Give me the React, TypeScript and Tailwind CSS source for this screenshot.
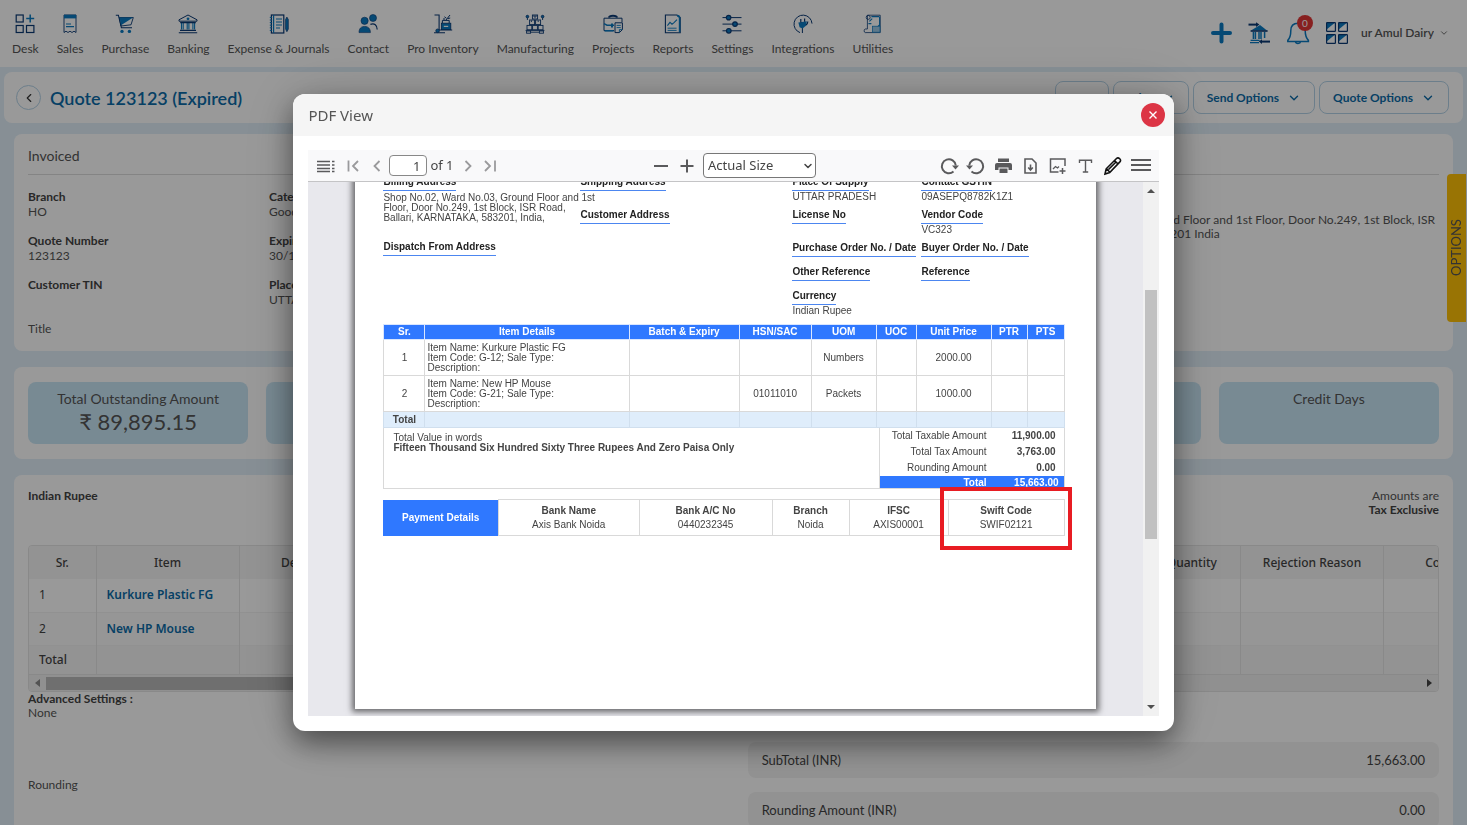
import React from "react";
import { ChevronDown, ChevronLeft } from "lucide-react";

const NAVY = "#0b3a75";
const BLUE = "#0a7bc2";

function Svg({ children, size = 20, box = 20 }: { children: React.ReactNode; size?: number; box?: number }) {
  return (
    <svg width={size} height={size} viewBox={`0 0 ${box} ${box}`} fill="none" stroke={NAVY} strokeWidth="1.2" aria-hidden="true">
      {children}
    </svg>
  );
}

const navItems: { label: string; icon: React.ReactNode }[] = [
  {
    label: "Desk",
    icon: (
      <Svg>
        <rect x="1.2" y="1" width="7" height="7" />
        <rect x="1.2" y="11.5" width="7" height="7" />
        <rect x="11.5" y="11.5" width="7.4" height="7" />
        <path d="M15.2 0.5v8M11.2 4.5h8" stroke={BLUE} strokeWidth="1.5" />
      </Svg>
    ),
  },
  {
    label: "Sales",
    icon: (
      <Svg>
        <path d="M4 1h12v17.5l-2-1.3-2 1.3-2-1.3-2 1.3-2-1.3-2 1.3z" strokeWidth="0.9" />
        <rect x="4" y="0.8" width="12.2" height="3.6" fill={BLUE} stroke="none" />
        <path d="M6 10h5M6 12.6h8" stroke={BLUE} />
      </Svg>
    ),
  },
  {
    label: "Purchase",
    icon: (
      <Svg>
        <path d="M0.8 1.2h2.6l3 12.6h10.6" strokeWidth="1.1" />
        <path d="M4.3 3.5h14L16 10.8 6 12z" strokeWidth="0.9" />
        <path d="M4.5 3.5h13.6L6 11.2z" fill={BLUE} stroke="none" />
        <circle cx="7" cy="17.4" r="1.7" fill={BLUE} stroke="none" />
        <circle cx="14.4" cy="17.4" r="1.7" fill={BLUE} stroke="none" />
      </Svg>
    ),
  },
  {
    label: "Banking",
    icon: (
      <Svg>
        <path d="M1 7.2V5.8L10 1l9 4.8v1.4z" strokeWidth="1" />
        <circle cx="10" cy="4.8" r="1.4" fill={BLUE} stroke="none" />
        <path d="M3.5 9v6.6M5.2 9v6.6M9.2 9v6.6M10.9 9v6.6M14.9 9v6.6M16.6 9v6.6" strokeWidth="1.1" stroke={BLUE} />
        <path d="M2.2 8.6h15.6M2 16.4h16M0.8 18.8h18.4" strokeWidth="1.1" />
      </Svg>
    ),
  },
  {
    label: "Expense & Journals",
    icon: (
      <Svg>
        <rect x="2.4" y="1" width="12.4" height="18" strokeWidth="1.2" />
        <path d="M4.6 1v18" stroke={BLUE} />
        <path d="M0.8 3.4h2.4M0.8 6h2.4M0.8 8.6h2.4M0.8 11.2h2.4M0.8 13.8h2.4M0.8 16.4h2.4" stroke={BLUE} strokeWidth="1" />
        <path d="M7 5h6M7 8h6M7 11h6M7 14h4" stroke={BLUE} strokeWidth="1.1" />
        <path d="M16.6 5.5l1.3-2.4 1.4 2.4v9.6l-1.4 2.6-1.3-2.6z" fill={BLUE} strokeWidth="0.7" />
      </Svg>
    ),
  },
  {
    label: "Contact",
    icon: (
      <Svg>
        <circle cx="6.6" cy="6.8" r="3.6" fill={BLUE} strokeWidth="0.6" />
        <path d="M1 18.6c0-4 2-6.2 5.6-6.2s5.8 2.2 5.8 6.2z" fill={BLUE} strokeWidth="0.6" />
        <circle cx="15" cy="4" r="3.5" fill={BLUE} strokeWidth="0.6" />
        <path d="M12.4 10.4c4-1.6 6.8.8 6.8 5.2" />
      </Svg>
    ),
  },
  {
    label: "Pro Inventory",
    icon: (
      <Svg>
        <path d="M1.5 1h4.6v15.2M6 16h13.2M1 18.8h11" strokeWidth="1.1" />
        <circle cx="4.6" cy="16.8" r="1.8" fill={BLUE} strokeWidth="0.8" />
        <rect x="8.4" y="9.2" width="9.4" height="6.4" fill={BLUE} strokeWidth="0.8" />
        <path d="M10.8 12.4h4.4" stroke="#fff" />
        <path d="M9.4 9V6.4h6.8V9M11 6V4M13 6l4-5M11.4 2.8l2 1.4M14.6 4.6l2.6-.6" strokeWidth="1" />
      </Svg>
    ),
  },
  {
    label: "Manufacturing",
    icon: (
      <Svg>
        <g strokeWidth="0.9">
          <rect x="7.4" y="1" width="5.2" height="4" />
          <rect x="4.6" y="6" width="5" height="4.6" />
          <rect x="10.6" y="6" width="5" height="4.6" />
          <rect x="2" y="11.4" width="4.8" height="4.4" />
          <rect x="7.6" y="11.4" width="4.8" height="4.4" />
          <rect x="13.2" y="11.4" width="4.8" height="4.4" />
          <path d="M0.6 16.4h18.8M2.4 6v-2M17.6 6v-2M9 1v2h2v-2M6.4 6.4v1.6M13.2 6.4v1.6" />
          <circle cx="2.4" cy="2.6" r="1.3" fill={BLUE} />
          <circle cx="17.6" cy="2.6" r="1.3" fill={BLUE} />
          <rect x="1.6" y="17" width="4" height="2.2" />
          <rect x="14.4" y="17" width="4" height="2.2" />
          <path d="M6 18.2h8" />
        </g>
      </Svg>
    ),
  },
  {
    label: "Projects",
    icon: (
      <Svg>
        <path d="M6 3.6C6.4 1 13.6 1 14 3.6" strokeWidth="2" />
        <path d="M11 16.6H1V4.2h18v4" strokeWidth="1" />
        <path d="M1 9.6l3 1.6h7" stroke={BLUE} strokeWidth="1.4" />
        <path d="M9 9.4v4" stroke={BLUE} strokeWidth="2" />
        <path d="M1.6 16.8h9" stroke={BLUE} strokeWidth="1.6" />
        <path d="M12 8.8h7.4v6.8l-3 3H12z" strokeWidth="1" />
        <path d="M13.6 11.4h4.2M13.6 13.6h4.2M16.4 18.4v-2.8h3" stroke={BLUE} strokeWidth="0.9" />
      </Svg>
    ),
  },
  {
    label: "Reports",
    icon: (
      <Svg>
        <path d="M2.4 1h11.4l3.4 2.6v15.2H2.4z" strokeWidth="1.1" />
        <path d="M14 1.6c1.6 0 2.6 1 2.6 2.6v14" stroke={BLUE} strokeWidth="1.6" />
        <path d="M4.4 11.6l2.6-3.2 2 1.8 2-1.6 3-3" stroke={BLUE} strokeWidth="1.1" />
        <path d="M4.6 14.2h9M4.6 16.4h9" stroke={BLUE} strokeWidth="0.9" />
      </Svg>
    ),
  },
  {
    label: "Settings",
    icon: (
      <Svg>
        <path d="M0.5 3.6h19M0.5 10.1h19M0.5 16.8h19" strokeWidth="1" />
        <circle cx="6.6" cy="3.6" r="2.3" fill={BLUE} />
        <circle cx="13" cy="10.1" r="2.3" fill={BLUE} />
        <circle cx="6.8" cy="16.8" r="2.3" fill={BLUE} />
      </Svg>
    ),
  },
  {
    label: "Integrations",
    icon: (
      <Svg>
        <path d="M9.4 19v-5.2M7 18.6A9 9 0 1 1 19 9.6" strokeWidth="1" />
        <path d="M5.4 8.6l8.4-1.4-.6 4.4-3.6 2.8-3-1.2z" fill={BLUE} stroke="none" />
        <path d="M7.8 8.4V5M11.6 7.8V4.4M13 11c1.4-.8 1.8-2 1.8-3.4" strokeWidth="1.2" />
      </Svg>
    ),
  },
  {
    label: "Utilities",
    icon: (
      <Svg>
        <path d="M4.4 1.2h12.8v17.4H2.2c-1.4 0-1.4-3.6 0-3.6h2.2z" strokeWidth="0.8" />
        <circle cx="5.2" cy="3.4" r="2" strokeWidth="0.8" />
        <path d="M8.4 2.6h8M16.6 3v9M6.4 7.4l2.8-2.8M5.4 9.6h3M12.6 15.4l3.6-4.2" stroke={BLUE} strokeWidth="1.1" />
        <rect x="9.4" y="12.2" width="7.6" height="6" fill="#9cc9e6" stroke={BLUE} strokeWidth="0.7" />
      </Svg>
    ),
  },
];

const fields: { label: string; value?: string }[][] = [
  [{ label: "Branch", value: "HO" }, { label: "Category", value: "Goods" }],
  [{ label: "Quote Number", value: "123123" }, { label: "Expiry Date", value: "30/11/2023" }],
  [{ label: "Customer TIN" }, { label: "Place Of Supply", value: "UTTAR PRADESH" }],
];

function TopBar() {
  return (
    <header className="flex h-[67px] items-start justify-between bg-white text-[#555]">
      <nav className="flex gap-[18px] pl-3 pt-[14px]">
        {navItems.map((n) => (
          <a key={n.label} href="#" className="flex flex-col items-center gap-[7px] whitespace-nowrap text-[12px] leading-4">
            {n.icon}
            {n.label}
          </a>
        ))}
      </nav>
      <div className="flex items-center pr-[18px] pt-[20px]">
        <button aria-label="Add" className="mr-4">
          <svg width="21" height="26" viewBox="0 0 21 26" stroke={BLUE} strokeWidth="4" strokeLinecap="round">
            <path d="M10.5 4.5v17M2 13h17" />
          </svg>
        </button>
        <button aria-label="Bank transfer" className="mr-4">
          <Svg size={22} box={22}>
            <path d="M3 8.4L12 3l7 5.4z" fill={BLUE} stroke="none" />
            <path d="M0.5 2.6h8" strokeWidth="2" />
            <path d="M8 0.2l3.4 2.4L8 5z" fill={NAVY} stroke="none" />
            <path d="M2.6 9h17" strokeWidth="1.6" />
            <path d="M5.4 10v7M7.4 10v7M11 10v7M13 10v7M16.6 10v6" stroke={BLUE} strokeWidth="1.5" />
            <path d="M2.6 18.4h9M2 20.6h9" stroke={BLUE} strokeWidth="1.3" />
            <path d="M13 19.6h9" strokeWidth="2" />
            <path d="M14 17.2l-3.2 2.4 3.2 2.4z" fill={NAVY} stroke="none" />
          </Svg>
        </button>
        <button aria-label="Notifications" className="relative mr-4">
          <svg width="24" height="24" viewBox="0 0 24 24" fill="none" stroke={BLUE} strokeWidth="1.5">
            <path d="M12 2.2c4.6 0 7.2 3 7.2 7.4 0 5 1 7.6 3.2 9.8v1H1.8v-1C4 17.200 4.800 14.600 4.800 9.600 4.800 5.200 7.400 2.200 12 2.200zM9.400 20.600c.4 2.400 4.800 2.400 5.200 0" />
          </svg>
          <span className="absolute -top-[6px] left-[11px] h-4 w-4 rounded-full bg-[#e23636] text-center text-[10px] leading-4 text-white">0</span>
        </button>
        <button aria-label="Apps" className="mr-3">
          <Svg size={22} box={22}>
            {[0, 12].map((x) =>
              [0, 12].map((y) => (
                <g key={`${x}-${y}`}>
                  <path d={`M${x + 0.6} ${y + 0.6}h8.600l-8.600 7z`} fill={BLUE} stroke="none" />
                  <rect x={x + 0.6} y={y + 0.6} width="8.800" height="8.800" rx="0.600" />
                </g>
              )),
            )}
          </Svg>
        </button>
        <button className="flex items-center gap-[5px] text-[12px] font-semibold leading-4">
          <span className="flex w-[74px] justify-end overflow-hidden whitespace-nowrap">ur Amul Dairy</span>
          <ChevronDown size={10} />
        </button>
      </div>
    </header>
  );
}

function BarButton({ children }: { children: React.ReactNode }) {
  return (
    <button className="flex h-[33px] items-center gap-2 rounded-lg border border-[#b5d3e8] px-[13px] text-[12px] font-bold text-[#0b6ba8]">
      {children}
      <ChevronDown size={14} strokeWidth={2.4} />
    </button>
  );
}

function TitleBar() {
  return (
    <div className="mx-1 mt-[5px] flex h-[51px] items-center justify-between rounded-lg bg-white pl-3 pr-[14px]">
      <div className="flex items-center gap-[9px]">
        <button aria-label="Back" className="flex h-[25px] w-[25px] items-center justify-center rounded-full border border-[#b5d3e8] text-[#333]">
          <ChevronLeft size={14} />
        </button>
        <h1 className="text-[18px] font-semibold leading-6 text-[#0b6ba8]">Quote 123123 (Expired)</h1>
      </div>
      <div className="flex gap-1">
        <button aria-label="Upload" className="h-[33px] w-[54px] rounded-lg border border-[#b5d3e8]">
          <span className="mx-auto block h-[6px] w-[6px] rounded-full bg-[#0b6ba8]" />
        </button>
        <BarButton>Print</BarButton>
        <BarButton>Send Options</BarButton>
        <BarButton>Quote Options</BarButton>
      </div>
    </div>
  );
}

function InvoicedCard() {
  return (
    <section className="mx-[14px] mt-[11px] h-[217px] rounded-lg bg-white px-[14px] pt-[10px] text-[12px] leading-[15px] text-[#555]">
      <h2 className="border-b border-[#dcdcdc] pb-[6px] text-[14px] leading-6">Invoiced</h2>
      <div className="mt-[14px] flex justify-between">
        <div className="flex w-1/2 flex-col gap-[14px]">
          {fields.map((row, i) => (
            <dl key={i} className="flex h-[30px]">
              {row.map((f) => (
                <div key={f.label} className="w-[241px]">
                  <dt className="font-bold text-[#444]">{f.label}</dt>
                  <dd>{f.value}</dd>
                </div>
              ))}
            </dl>
          ))}
          <p>Title</p>
        </div>
        <p className="whitespace-nowrap pr-1 pt-6 leading-[14px]">
          Shop No.02, Ward No.03, Ground Floor and 1st Floor, Door No.249, 1st Block, ISR
          <br />
          Road, Ballari, KARNATAKA, 583201 India
        </p>
      </div>
    </section>
  );
}

function Tiles() {
  const tiles = [{ t: "Total Outstanding Amount", v: "₹ 89,895.15" }, {}, {}, {}, {}, { t: "Credit Days" }] as { t?: string; v?: string }[];
  return (
    <section className="mx-[14px] mt-4 grid grid-cols-6 gap-[18px] rounded-lg bg-white px-[14px] py-[15px] text-[#555]">
      {tiles.map((t, i) => (
        <div key={i} className="h-[62px] rounded-lg bg-[#c9e6f5] pt-2 text-center">
          <p className="text-[14px] leading-[18px]">{t.t}</p>
          <p className="text-[22px] leading-7">{t.v}</p>
        </div>
      ))}
    </section>
  );
}

function ItemsTable() {
  const cell = "border-r border-[#e4e4e4] px-[10px]";
  return (
    <div className="mt-7 overflow-hidden rounded border border-[#e4e4e4] font-['Noto_Sans',sans-serif] text-[#444]">
      <table className="w-[calc(100%+92px)] table-fixed border-collapse text-[12px]">
        <colgroup>
          <col className="w-[67px]" />
          <col className="w-[143px]" />
          <col className="w-[150px]" />
          <col />
          <col className="w-[150px]" />
          <col className="w-[143px]" />
          <col className="w-[146px]" />
        </colgroup>
        <thead className="h-[33px] bg-[#f5f5f5]">
          <tr>
            {["Sr.", "Item", "Description", "", "Rejected Quantity", "Rejection Reason", "Comments"].map((h, i) => (
              <th key={i} className={`${cell} whitespace-nowrap font-medium`}>{h}</th>
            ))}
          </tr>
        </thead>
        <tbody>
          {["Kurkure Plastic FG", "New HP Mouse"].map((name, i) => (
            <tr key={name} className="h-[33px] border-b border-[#f2f2f2] even:bg-[#fbfbfb]">
              <td className={cell}>{i + 1}</td>
              <td className={`${cell} whitespace-nowrap font-semibold`}>
                <a href="#" className="text-[#0b6ba8]">{name}</a>
              </td>
              {[0, 1, 2, 3, 4].map((k) => (
                <td key={k} className={cell} />
              ))}
            </tr>
          ))}
          <tr className="h-[29px] bg-[#f5f5f5]">
            <td className={`${cell} font-medium`}>Total</td>
            {[0, 1, 2, 3, 4, 5].map((k) => (
              <td key={k} className={cell} />
            ))}
          </tr>
        </tbody>
      </table>
      <div className="flex h-[17px] items-center justify-between border-t border-[#e4e4e4] bg-[#f1f1f1] px-[6px]">
        <svg width="5" height="8" viewBox="0 0 5 8"><path d="M5 0v8L0 4z" fill="#8a8a8a" /></svg>
        <div className="ml-[6px] h-[13px] w-1/2 bg-[#b9b9b9]" />
        <div className="flex-1" />
        <svg width="5" height="8" viewBox="0 0 5 8"><path d="M0 0v8l5-4z" fill="#444" /></svg>
      </div>
    </div>
  );
}

function DetailsCard() {
  return (
    <section className="mx-[14px] mt-4 h-[400px] rounded-t-lg bg-white px-[14px] pt-[14px] text-[12px] leading-[14px] text-[#555]">
      <div className="flex justify-between">
        <strong className="font-bold text-[#444]">Indian Rupee</strong>
        <p className="text-right">
          Amounts are
          <br />
          <strong className="font-bold text-[#444]">Tax Exclusive</strong>
        </p>
      </div>
      <ItemsTable />
      <div className="flex justify-between">
        <div>
          <p className="font-bold text-[#444]">Advanced Settings :</p>
          <p>None</p>
          <p className="mt-[58px]">Rounding</p>
        </div>
        <div className="mt-[50px] flex w-[49%] flex-col gap-[14px] text-[13px] text-[#444]">
          <div className="flex h-9 items-center justify-between rounded-lg bg-[#f3f3f3] px-[14px]">
            <span>SubTotal (INR)</span>
            <span>15,663.00</span>
          </div>
          <div className="flex h-9 items-center justify-between rounded-lg bg-[#f3f3f3] px-[14px]">
            <span>Rounding Amount (INR)</span>
            <span>0.00</span>
          </div>
        </div>
      </div>
    </section>
  );
}

function ToolIcon({ label, children, w = 20 }: { label: string; children: React.ReactNode; w?: number }) {
  return (
    <button aria-label={label} className="flex h-6 items-center justify-center">
      <svg width={w} height="20" viewBox={`0 0 ${w} 20`} fill="none" stroke="#5a5a5c" strokeWidth="2">
        {children}
      </svg>
    </button>
  );
}

function Toolbar() {
  return (
    <div className="grid h-8 grid-cols-[1fr_auto_1fr] items-center border-b border-[#c4c4c6] bg-[#f9f9fa] px-2 text-[13px] text-[#444]">
      <div className="flex items-center">
        <ToolIcon label="Toggle sidebar">
          <path d="M1 5.500h13M1 9h13M1 12.500h13M1 15.500h13M16 5.500h2.500M16 9h2.500M16 12.500h2.500M16 15.500h2.500" strokeWidth="1.700" />
        </ToolIcon>
        <span className="ml-2 flex gap-1">
          <ToolIcon label="First page">
            <path d="M4.500 4.500v11M14 5l-5 5 5 5" stroke="#9a9a9c" strokeWidth="1.800" />
          </ToolIcon>
          <ToolIcon label="Previous page">
            <path d="M11.500 5l-5 5 5 5" stroke="#9a9a9c" strokeWidth="1.800" />
          </ToolIcon>
        </span>
        <input aria-label="Page" defaultValue="1" className="ml-[1px] h-[21px] w-[38px] rounded-sm border border-[#888] bg-white px-[6px] text-right" />
        <span className="ml-[3px]">of 1</span>
        <span className="ml-1 flex gap-[2px]">
          <ToolIcon label="Next page">
            <path d="M7.500 5l5 5-5 5" stroke="#9a9a9c" strokeWidth="1.800" />
          </ToolIcon>
          <ToolIcon label="Last page">
            <path d="M5 5l5 5-5 5M15 4.500v11" stroke="#9a9a9c" strokeWidth="1.800" />
          </ToolIcon>
        </span>
      </div>
      <div className="flex items-center gap-[6px]">
        <ToolIcon label="Zoom out">
          <path d="M3 10h14" />
        </ToolIcon>
        <ToolIcon label="Zoom in">
          <path d="M3.500 10h13M10 3.500v13" />
        </ToolIcon>
        <span className="relative flex items-center">
          <select aria-label="Zoom" className="h-[25px] w-[113px] appearance-none rounded-sm border border-[#777] bg-white pl-1 text-[13px]">
            <option>Actual Size</option>
          </select>
          <ChevronDown size={12} strokeWidth={3} className="pointer-events-none absolute right-[2px]" />
        </span>
      </div>
      <div className="flex items-center justify-end gap-[7px]">
        <ToolIcon label="Rotate clockwise">
          <path d="M14.500 15.500A7 7 0 1 1 16.800 9.500" />
          <path d="M13 9.500h7l-3.500 4z" fill="#5a5a5c" stroke="none" />
        </ToolIcon>
        <ToolIcon label="Rotate counterclockwise">
          <path d="M5.500 15.500A7 7 0 1 0 3.200 9.500" />
          <path d="M0 9.500h7l-3.500 4z" fill="#5a5a5c" stroke="none" />
        </ToolIcon>
        <ToolIcon label="Print">
          <path d="M5 2.500h11v3.500H5zM4 7h13a2 2 0 0 1 2 2v5h-3.500v-2.500h-10V14H2V9a2 2 0 0 1 2-2zM6.500 12.500h8v4.500h-8z" fill="#5a5a5c" stroke="none" />
        </ToolIcon>
        <ToolIcon label="Download">
          <path d="M5 3h7l4 4v10H5z" strokeWidth="1.600" />
          <path d="M10.500 8.500v5M8.200 11.500l2.300 2.500 2.300-2.500" strokeWidth="1.600" />
        </ToolIcon>
        <span className="flex gap-2">
          <ToolIcon label="Add image">
            <path d="M18 10V3H3.500v13h8" strokeWidth="1.500" />
            <path d="M6 13l2.500-2.500 2 1.500 1.500-1.500" strokeWidth="1.300" />
            <path d="M15.500 12v6M12.500 15h6" strokeWidth="1.500" />
          </ToolIcon>
          <ToolIcon label="Add text">
            <path d="M4.500 7V4.200h12V7M10.500 4.500v11.500M7.800 16h5.400" strokeWidth="1.400" />
          </ToolIcon>
          <ToolIcon label="Draw">
            <path d="M2 18l1.200-5.200L13.500 2.500c1-1 2.200-.8 3.200.2s1.200 2.200.2 3.200L6.700 16.500zM11.500 4.500l3.800 3.800M3.500 12.800l3.400 3.500M5.500 13.500l7-7" stroke="#111" strokeWidth="1.600" />
          </ToolIcon>
          <ToolIcon label="Menu">
            <path d="M0 4h20M0 9h20M0 14h20" strokeWidth="1.800" />
          </ToolIcon>
        </span>
      </div>
    </div>
  );
}

function DocField({ label, children }: { label: string; children?: React.ReactNode }) {
  return (
    <div>
      <div className="inline-block h-4 border-b border-[#4c86f0] align-top text-[10px] font-bold leading-[14px] text-[#222]">{label}</div>
      <div className="min-h-[3px] leading-[12px]">{children}</div>
    </div>
  );
}

function Document() {
  const cell = "border border-[#d9d9d9] px-[2px]";
  const rows = [
    { d: ["Item Name: Kurkure Plastic FG", "Item Code: G-12; Sale Type:"], hsn: "", uom: "Numbers", price: "2000.00" },
    { d: ["Item Name: New HP Mouse", "Item Code: G-21; Sale Type:"], hsn: "01011010", uom: "Packets", price: "1000.00" },
  ];
  const pay = [
    ["Bank Name", "Axis Bank Noida"],
    ["Bank A/C No", "0440232345"],
    ["Branch", "Noida"],
    ["IFSC", "AXIS00001"],
    ["Swift Code", "SWIF02121"],
  ];
  const sums = [
    ["Total Taxable Amount", "11,900.00"],
    ["Total Tax Amount", "3,763.00"],
    ["Rounding Amount", "0.00"],
  ];
  return (
    <article className="-mt-[7px] h-full flex-1 bg-white pl-7 pr-[31px] pb-2 font-['Liberation_Sans',Arial,sans-serif] text-[10px] text-[#444] shadow-[0_0_6px_3px_rgba(0,0,0,0.55)]">
      <div className="grid grid-cols-[197px_212px_129px_1fr]">
        <div className="flex flex-col gap-[17px]">
          <DocField label="Billing Address">
            <p className="whitespace-nowrap pt-[2px] leading-[10px]">
              Shop No.02, Ward No.03, Ground Floor and 1st
              <br />
              Floor, Door No.249, 1st Block, ISR Road,
              <br />
              Ballari, KARNATAKA, 583201, India,
            </p>
          </DocField>
          <DocField label="Dispatch From Address" />
        </div>
        <div className="flex flex-col gap-[14px]">
          <DocField label="Shipping Address" />
          <DocField label="Customer Address" />
        </div>
        <div className="col-span-2 grid grid-cols-[129px_1fr] gap-y-[5px]">
          <DocField label="Place Of Supply">UTTAR PRADESH</DocField>
          <DocField label="Contact GSTIN">09ASEPQ8782K1Z1</DocField>
          <DocField label="License No" />
          <DocField label="Vendor Code">VC323</DocField>
          <DocField label="Purchase Order No. / Date" />
          <DocField label="Buyer Order No. / Date" />
          <DocField label="Other Reference" />
          <DocField label="Reference" />
          <DocField label="Currency">Indian Rupee</DocField>
        </div>
      </div>
      <table className="mt-[7px] w-full table-fixed border-collapse text-center leading-[10px]">
        <colgroup>
          <col className="w-[41px]" />
          <col />
          <col className="w-[110px]" />
          <col className="w-[72px]" />
          <col className="w-[65px]" />
          <col className="w-[40px]" />
          <col className="w-[75px]" />
          <col className="w-[36px]" />
          <col className="w-[37px]" />
        </colgroup>
        <thead>
          <tr className="h-[15px] bg-[#2f78ff] text-white">
            {["Sr.", "Item Details", "Batch & Expiry", "HSN/SAC", "UOM", "UOC", "Unit Price", "PTR", "PTS"].map((h) => (
              <th key={h} className="border border-[#d9e6ff] font-bold">{h}</th>
            ))}
          </tr>
        </thead>
        <tbody>
          {rows.map((r, i) => (
            <tr key={i} className="h-9">
              <td className={cell}>{i + 1}</td>
              <td className={`${cell} text-left`}>
                {r.d[0]}
                <br />
                {r.d[1]}
                <br />
                Description:
              </td>
              <td className={cell} />
              <td className={cell}>{r.hsn}</td>
              <td className={cell}>{r.uom}</td>
              <td className={cell} />
              <td className={cell}>{r.price}</td>
              <td className={cell} />
              <td className={cell} />
            </tr>
          ))}
          <tr className="h-4 bg-[#dfedfb]">
            <td className="border border-[#d0dfee] font-bold">Total</td>
            {[0, 1, 2, 3, 4, 5, 6, 7].map((k) => (
              <td key={k} className="border border-[#d0dfee]" />
            ))}
          </tr>
        </tbody>
      </table>
      <div className="flex h-[61px] border border-t-0 border-[#d9d9d9]">
        <div className="flex-1 border-r border-[#d9d9d9] pl-[9px] pt-[5px] leading-[10px]">
          <p>Total Value in words</p>
          <p className="font-bold">Fifteen Thousand Six Hundred Sixty Three Rupees And Zero Paisa Only</p>
        </div>
        <div className="flex w-[184px] flex-col overflow-hidden leading-4">
          {sums.map(([k, v]) => (
            <div key={k} className="flex justify-end pr-2">
              <span>{k}</span>
              <b className="w-[69px] text-right">{v}</b>
            </div>
          ))}
          <div className="flex h-3 justify-end bg-[#2f78ff] pr-[5px] font-bold leading-[14px] text-white">
            <span>Total</span>
            <span className="w-[72px] text-right">15,663.00</span>
          </div>
        </div>
      </div>
      <div className="relative mt-[10px]">
        <table className="w-full table-fixed border-collapse text-center">
          <colgroup>
            <col className="w-[115px]" />
            <col />
            <col className="w-[133px]" />
            <col className="w-[77px]" />
            <col className="w-[99px]" />
            <col className="w-[116px]" />
          </colgroup>
          <tbody>
            <tr className="h-9">
              <th className="bg-[#2f78ff] font-bold text-white">Payment Details</th>
              {pay.map(([k, v]) => (
                <td key={k} className="border border-[#d9d9d9] leading-[14px]">
                  <b>{k}</b>
                  <br />
                  {v}
                </td>
              ))}
            </tr>
          </tbody>
        </table>
        <div className="absolute -right-[7px] -top-3 h-[63px] w-[132px] border-4 border-[#e81c23]" />
      </div>
    </article>
  );
}

function PdfDialog() {
  return (
    <div className="fixed inset-0 flex items-center justify-center bg-black/40">
      <div role="dialog" aria-label="PDF View" className="w-3/5 overflow-hidden rounded-xl bg-white shadow-[0_12px_28px_rgba(0,0,0,0.45),0_0_60px_rgba(0,0,0,0.15)]">
        <div className="flex h-[42px] items-center justify-between bg-[#f5f5f5] pl-[15px] pr-[9px] font-['Noto_Sans',sans-serif] text-[#555]">
          <h2 className="text-[15px]">PDF View</h2>
          <button aria-label="Close" className="flex h-6 w-6 items-center justify-center rounded-full bg-[#dc3545]">
            <svg width="8" height="8" viewBox="0 0 8 8" stroke="#fff" strokeWidth="1.400"><path d="M0.500 0.500l7 7M7.500 0.500l-7 7" /></svg>
          </button>
        </div>
        <div className="px-[15px] pb-[15px] pt-[14px] font-['Noto_Sans',sans-serif]">
          <Toolbar />
          <div className="flex h-[534px] overflow-hidden bg-[#e8e8ed] pl-[47px]">
            <Document />
            <div className="ml-[47px] flex w-4 flex-col items-center bg-[#f1f1f1] py-[7px]">
              <svg width="8" height="4" viewBox="0 0 8 4"><path d="M0 4h8L4 0z" fill="#505050" /></svg>
              <div className="mt-[97px] h-[249px] w-3 bg-[#c1c1c1]" />
              <svg className="mt-auto" width="8" height="4" viewBox="0 0 8 4"><path d="M0 0h8L4 4z" fill="#505050" /></svg>
            </div>
          </div>
        </div>
      </div>
    </div>
  );
}

export default function App() {
  return (
    <div className="relative h-screen overflow-hidden bg-[#e1eff9] font-[Lato,'Open_Sans',sans-serif]">
      <TopBar />
      <TitleBar />
      <main>
        <InvoicedCard />
        <Tiles />
        <DetailsCard />
      </main>
      <button className="fixed right-px top-[174px] h-[148px] w-[19px] rotate-180 rounded-r bg-[#ffc107] text-center text-[13px] leading-[19px] text-[#555] [writing-mode:vertical-rl]">
        OPTIONS
      </button>
      <PdfDialog />
    </div>
  );
}
